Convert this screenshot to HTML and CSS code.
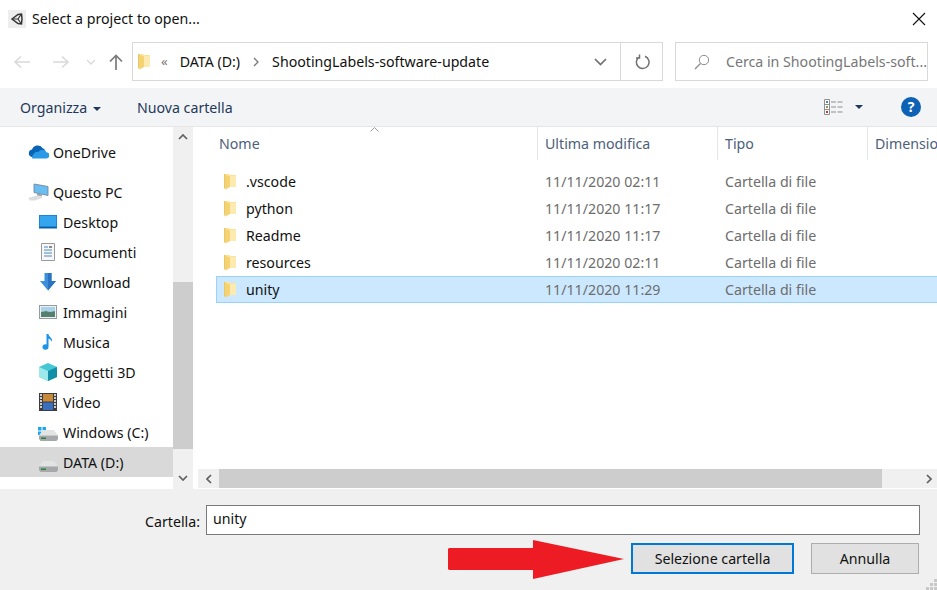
FILE: index.html
```html
<!DOCTYPE html>
<html lang="it">
<head>
  <meta charset="UTF-8" />
  <title>Select a project to open...</title>
  <link rel="stylesheet" href="styles.css">
</head>
<body>
  <svg class="defs" width="0" height="0">
    <symbol id="folder" viewBox="0 0 12 17">
      <path d="M0 1h5l1 1h6v12H0z" fill="#fbe39a"/>
      <path d="M6 3h6v11H6z" fill="#fdeab0"/>
      <path d="M1.500 2L6 3.500V14l-4.500 2.500z" fill="#f5d272"/>
      <path d="M0 1h1.500v15.500L0 15z" fill="#ecc765"/>
    </symbol>
    <symbol id="drive" viewBox="0 0 19 11">
      <path d="M4 0h11l4 5.500H0z" fill="#e2e4e4"/>
      <path d="M0 5.500h19V9l-1.500 2h-16L0 9z" fill="#a5a9a9"/>
      <path d="M2 7.500h5V9H2z" fill="#2f7f3f"/>
    </symbol>
  </svg>

  <!-- barra del titolo -->
  <header class="title-bar">
    <span class="app-icon">
      <svg width="18" height="18" viewBox="0 0 18 18">
        <rect width="18" height="18" fill="#eeeeee"/>
        <path d="M4 9l6-4.500 3.500-.5.500 5-.5 5-3.500-.5z" fill="none" stroke="#333" stroke-width="1.500"/>
        <path d="M5 9h5l3-4.500M10 9l3 4.500" fill="none" stroke="#333" stroke-width="1.200"/>
      </svg>
    </span>
    <span class="title-text">Select a project to open...</span>
    <svg class="close-icon" width="14" height="14" viewBox="0 0 14 14"><path d="M1 1l12 12M13 1L1 13" stroke="#111" stroke-width="1.100"/></svg>
  </header>

  <!-- navigazione -->
  <nav class="nav-bar">
    <div class="nav-buttons">
      <svg class="nav-back" width="18" height="14" viewBox="0 0 18 14"><path d="M17 7H2M8 1.500L2 7l6 5.500" fill="none" stroke="#d9d9d9" stroke-width="1.600"/></svg>
      <svg class="nav-forward" width="18" height="14" viewBox="0 0 18 14"><path d="M1 7h15M10 1.500L16 7l-6 5.500" fill="none" stroke="#d9d9d9" stroke-width="1.600"/></svg>
      <svg class="nav-recent" width="10" height="6" viewBox="0 0 10 6"><path d="M1 1l4 4 4-4" fill="none" stroke="#d9d9d9" stroke-width="1.300"/></svg>
      <svg class="nav-up" width="14" height="16" viewBox="0 0 14 16"><path d="M7 16V2M1 7.500L7 1.500l6 6" fill="none" stroke="#7a7a7a" stroke-width="1.700"/></svg>
    </div>
    <div class="address-box">
      <svg class="addr-folder" width="12" height="17"><use href="#folder"/></svg>
      <span class="addr-more">«</span>
      <span class="addr-part">DATA (D:)</span>
      <svg class="addr-sep" width="6" height="10" viewBox="0 0 6 10"><path d="M1 1l4 4-4 4" fill="none" stroke="#777" stroke-width="1.300"/></svg>
      <span class="addr-part">ShootingLabels-software-update</span>
      <svg class="addr-drop" width="13" height="8" viewBox="0 0 13 8"><path d="M1 1l5.500 5.500L12 1" fill="none" stroke="#707070" stroke-width="1.700"/></svg>
      <span class="addr-refresh">
        <svg width="16" height="16" viewBox="0 0 16 16"><path d="M10 2.300a6.300 6.300 0 1 1-5 .2M4.500 .5v3.500h-3.500" transform="translate(1 0)" fill="none" stroke="#707070" stroke-width="1.500"/></svg>
      </span>
    </div>
    <div class="search-box">
      <svg width="16" height="16" viewBox="0 0 16 16"><circle cx="10" cy="6" r="4.700" fill="none" stroke="#8a8a8a" stroke-width="1"/><path d="M6.500 9.500L1 15" stroke="#8a8a8a" stroke-width="1.200"/></svg>
      <span>Cerca in ShootingLabels-soft...</span>
    </div>
  </nav>

  <!-- comandi -->
  <div class="tool-bar">
    <span class="tool-btn">Organizza <i class="caret"></i></span>
    <span class="tool-btn new-folder">Nuova cartella</span>
    <svg class="view-icon" width="19" height="16" viewBox="0 0 19 16">
      <path d="M.5.500h5v15h-5zM.5 5.500h5M.5 10.500h5" fill="#fff" stroke="#8f8f8f"/>
      <path d="M7 3h5M13.500 3h5M7 8h5M13.500 8h5M7 13h5M13.500 13h5" stroke="#8f8f8f"/>
      <path d="M2 2h2v2H2z" fill="#5a7ea8"/><path d="M2 7h2v2H2z" fill="#7d9a5a"/><path d="M2 12h2v2H2z" fill="#c0392b"/>
    </svg>
    <i class="caret view-caret"></i>
    <span class="help-btn">?</span>
  </div>

  <main class="main">
    <aside class="sidebar">
      <ul class="tree">
        <li class="tree-item top">
          <svg width="21" height="14" viewBox="0 0 21 14"><path d="M4 12a3.800 3.800 0 0 1 0-7.500 6 6 0 0 1 10.500-1.500 4.500 4.500 0 0 1 3 4z" fill="#0a64b4"/><path d="M4 13.500h14a3 3 0 0 0 .5-6.200c-2-3.300-6-3.300-8-.3-3-1-6 2-6.500 6.500z" fill="#2a9ae6"/></svg>
          <span>OneDrive</span>
        </li>
        <li class="tree-item top pc">
          <svg width="21" height="18" viewBox="0 0 21 18"><path d="M6 1l14 2.500v9L6 9.500z" fill="#69bdf0" stroke="#76899a" stroke-width=".9"/><path d="M9 10.500l5 1v2l-5-1z" fill="#9aa5ad"/><path d="M0 15l9-2.500 6 2-8 3H2z" fill="#dadedf"/></svg>
          <span>Questo PC</span>
        </li>
        <li class="tree-item">
          <svg width="18" height="14" viewBox="0 0 18 14"><rect width="18" height="13" fill="#1a86d8"/><path d="M1 1h16v10H1z" fill="#35a5ee"/><path d="M0 12h18v1.500H0z" fill="#0b5fa5"/></svg>
          <span>Desktop</span>
        </li>
        <li class="tree-item">
          <svg width="18" height="18" viewBox="0 0 18 18"><path d="M2.500.500h13v17h-13z" fill="#f7f7f7" stroke="#9a9a9a"/><path d="M5 4h4M5 7h8M5 10h8M5 13h8" stroke="#4a88c0"/><path d="M10 3h3v2h-3z" fill="#8a8a8a"/></svg>
          <span>Documenti</span>
        </li>
        <li class="tree-item">
          <svg width="18" height="18" viewBox="0 0 18 18"><path d="M5.500 0h7v8H17l-8 9.500L1 8h4.500z" fill="#3d8fdc"/><path d="M9 0h3.500v8H17l-8 9.500z" fill="#2a74bf"/></svg>
          <span>Download</span>
        </li>
        <li class="tree-item">
          <svg width="18" height="14" viewBox="0 0 18 14"><rect x=".5" y=".5" width="17" height="13" fill="#eaf2f6" stroke="#9a9a9a"/><path d="M2 2h14v4l-5 1-4-1-5 1z" fill="#a9d3ea"/><path d="M2 7l5-1 4 1 5-1v6H2z" fill="#55806f"/></svg>
          <span>Immagini</span>
        </li>
        <li class="tree-item">
          <svg width="18" height="18" viewBox="0 0 18 18"><path d="M8.500 1v12" stroke="#1f92ea" stroke-width="2"/><path d="M9 1c1 3 5 4 4 8-.5-2-2-3-4-3.500z" fill="#1f92ea"/><ellipse cx="6.500" cy="14" rx="3" ry="2.700" fill="#1f92ea"/></svg>
          <span>Musica</span>
        </li>
        <li class="tree-item">
          <svg width="18" height="18" viewBox="0 0 18 18"><path d="M9 0l9 4v10l-9 4-9-4V4z" fill="#45c7d6"/><path d="M0 4l9 4v10l-9-4z" fill="#9ce8ea"/><path d="M18 4L9 8v10l9-4z" fill="#128fa8"/></svg>
          <span>Oggetti 3D</span>
        </li>
        <li class="tree-item">
          <svg width="18" height="18" viewBox="0 0 18 18"><rect width="18" height="18" fill="#3d3d3d"/><path d="M4 1h10v7.500H4z" fill="#c9893a"/><path d="M4 9.500h10V17H4z" fill="#3a6fc0"/><path d="M1 2h2M1 5h2M1 8h2M1 11h2M1 14h2M15 2h2M15 5h2M15 8h2M15 11h2M15 14h2" stroke="#fff" stroke-width="1.400"/></svg>
          <span>Video</span>
        </li>
        <li class="tree-item">
          <span class="drive-win">
            <svg class="win-logo" width="8" height="8" viewBox="0 0 8 8"><path d="M0 0h3.500v3.500H0zM4.500 0H8v3.500H4.500zM0 4.500h3.500V8H0zM4.500 4.500H8V8H4.500z" fill="#1ea7ee"/></svg>
            <svg class="win-drive" width="19" height="11"><use href="#drive"/></svg>
          </span>
          <span>Windows (C:)</span>
        </li>
        <li class="tree-item selected">
          <svg class="data-drive" width="19" height="11"><use href="#drive"/></svg>
          <span>DATA (D:)</span>
        </li>
      </ul>
      <div class="v-scroll">
        <svg class="arrow" width="10" height="6" viewBox="0 0 10 6"><path d="M1 5l4-4 4 4" fill="none" stroke="#606060" stroke-width="1.700"/></svg>
        <div class="v-thumb"></div>
        <svg class="arrow" width="10" height="6" viewBox="0 0 10 6"><path d="M1 1l4 4 4-4" fill="none" stroke="#606060" stroke-width="1.700"/></svg>
      </div>
    </aside>

    <section class="files">
      <div class="file-head">
        <span class="col-name">Nome</span>
        <span>Ultima modifica</span>
        <span>Tipo</span>
        <span>Dimensione</span>
        <svg class="sort-mark" width="9" height="5" viewBox="0 0 9 5"><path d="M.5 4.500l4-4 4 4" fill="none" stroke="#9a9a9a"/></svg>
      </div>
      <div class="file-list">
        <div class="file-row">
          <span class="file-name"><svg width="12" height="17"><use href="#folder"/></svg>.vscode</span>
          <span>11/11/2020 02:11</span><span>Cartella di file</span>
        </div>
        <div class="file-row">
          <span class="file-name"><svg width="12" height="17"><use href="#folder"/></svg>python</span>
          <span>11/11/2020 11:17</span><span>Cartella di file</span>
        </div>
        <div class="file-row">
          <span class="file-name"><svg width="12" height="17"><use href="#folder"/></svg>Readme</span>
          <span>11/11/2020 11:17</span><span>Cartella di file</span>
        </div>
        <div class="file-row">
          <span class="file-name"><svg width="12" height="17"><use href="#folder"/></svg>resources</span>
          <span>11/11/2020 02:11</span><span>Cartella di file</span>
        </div>
        <div class="file-row active">
          <span class="file-name"><svg width="12" height="17"><use href="#folder"/></svg>unity</span>
          <span>11/11/2020 11:29</span><span>Cartella di file</span>
        </div>
      </div>
      <div class="h-scroll">
        <svg class="arrow-h" width="6" height="10" viewBox="0 0 6 10"><path d="M5 1L1 5l4 4" fill="none" stroke="#606060" stroke-width="1.700"/></svg>
        <div class="h-thumb"></div>
        <svg class="arrow-h" width="6" height="10" viewBox="0 0 6 10"><path d="M1 1l4 4-4 4" fill="none" stroke="#606060" stroke-width="1.700"/></svg>
      </div>
    </section>
  </main>

  <footer class="bottom">
    <div class="name-row">
      <label class="name-label">Cartella:</label>
      <div class="name-input">unity</div>
    </div>
    <div class="actions">
      <button class="btn primary">Selezione cartella</button>
      <button class="btn">Annulla</button>
    </div>
    <svg class="red-arrow" width="176" height="39" viewBox="0 0 176 39"><path d="M1 8h84V0l91 19L85 39v-9H1l-1-1V9z" fill="#ed1c24"/></svg>
    <svg class="grip" width="11" height="11" viewBox="0 0 11 11"><path d="M8 0h3v3H8zM4 4h3v3H4zM8 4h3v3H8zM0 8h3v3H0zM4 8h3v3H4zM8 8h3v3H8z" fill="#c8c8c8"/></svg>
  </footer>
</body>
</html>
```

FILE: styles.css
```css
* {
  box-sizing: border-box;
}
html, body {
  margin: 0;
  height: 590px;
  overflow: hidden;
}
body {
  font-family: "Noto Sans", "Open Sans", sans-serif;
  font-size: 14.2px;
  background: #fff;
  color: #111;
  display: flex;
  flex-direction: column;
  width: 937px;
}
.defs {
  display: block;
  height: 0;
}

/* barra del titolo */
.title-bar {
  height: 37px;
  display: flex;
  align-items: center;
  padding: 0 11px 0 8px;
  flex: none;
}
.app-icon {
  display: flex;
  margin-right: 6px;
}
.title-text {
  flex: 1;
}
.close-icon {
  display: block;
}

/* navigazione */
.nav-bar {
  height: 51px;
  flex: none;
  display: flex;
  padding: 5px 9px 7px 0;
}
.nav-buttons {
  width: 132px;
  display: flex;
  align-items: center;
  padding-left: 13px;
}
.nav-forward {
  margin-left: 21px;
}
.nav-recent {
  margin-left: 16px;
}
.nav-up {
  margin-left: 13px;
}
.address-box {
  width: 531px;
  display: flex;
  align-items: center;
  border: 1px solid #d9d9d9;
  padding-left: 5px;
}
.addr-more {
  margin: 0 12px 2px 11px;
  color: #777;
  font-size: 13px;
}
.addr-sep {
  margin: 0 13px;
}
.addr-drop {
  margin-left: auto;
  margin-right: 13px;
}
.addr-refresh {
  width: 42px;
  height: 100%;
  border-left: 1px solid #d9d9d9;
  display: flex;
  align-items: center;
  justify-content: center;
}
.search-box {
  width: 253px;
  margin-left: 12px;
  border: 1px solid #d9d9d9;
  display: flex;
  align-items: center;
  padding-left: 18px;
  gap: 16px;
  color: #777;
  white-space: nowrap;
  overflow: hidden;
}

/* comandi */
.tool-bar {
  height: 39px;
  flex: none;
  display: flex;
  align-items: center;
  background: #f3f4f6;
  border-bottom: 1px solid #e6e6e6;
  color: #1e395b;
  padding-left: 20px;
  padding-right: 16px;
}
.caret {
  display: inline-block;
  border: 4px solid transparent;
  border-top: 4px solid #1e395b;
  border-bottom: 0;
  vertical-align: 2px;
  margin-left: 2px;
}
.new-folder {
  margin-left: 36px;
}
.view-icon {
  margin-left: auto;
}
.view-caret {
  margin-left: 12px;
}
.help-btn {
  width: 20px;
  height: 20px;
  border-radius: 50%;
  background: #0d62b6;
  color: #fff;
  font-weight: 700;
  font-size: 14px;
  line-height: 20px;
  text-align: center;
  margin-left: 38px;
}

/* parte centrale */
.main {
  height: 362px;
  flex: none;
  display: flex;
}
.sidebar {
  width: 193px;
  flex: none;
  display: flex;
}
.tree {
  list-style: none;
  margin: 0;
  padding: 10px 0 0;
  width: 173px;
}
.tree-item {
  height: 30px;
  display: flex;
  align-items: center;
  gap: 6px;
  padding-left: 39px;
  color: #111;
}
.tree-item svg {
  flex: none;
}
.tree-item.top {
  padding-left: 28px;
  gap: 4px;
}
.tree-item.pc {
  margin: 10px 0 0;
}
.tree-item.selected {
  background: #d9d9d9;
  gap: 5px;
}
.drive-win {
  position: relative;
  width: 18px;
  height: 14px;
  display: block;
}
.win-logo {
  position: absolute;
  left: -1px;
  top: 2px;
}
.win-drive {
  position: absolute;
  left: 0;
  top: 5px;
}
.data-drive {
  margin-top: 8px;
}
.v-scroll {
  width: 20px;
  background: #f0f0f0;
  display: flex;
  flex-direction: column;
  align-items: center;
  padding: 7px 0 8px;
}
.v-thumb {
  background: #cdcdcd;
  width: 100%;
  height: 167px;
  margin: 142px 0 26px;
}
.arrow {
  flex: none;
}

/* elenco file */
.files {
  flex: 1;
  min-width: 0;
  display: flex;
  flex-direction: column;
}
.file-head {
  position: relative;
  height: 33px;
  flex: none;
  display: grid;
  grid-template-columns: 344px 180px 150px 1fr;
  color: #4c607a;
  white-space: nowrap;
  overflow: hidden;
}
.file-head span {
  padding-left: 7px;
  line-height: 33px;
  border-left: 1px solid #e5e5e5;
}
.file-head .col-name {
  padding-left: 26px;
  border-left: 0;
  border-right: 1px solid #e5e5e5;
  margin-right: -1px;
}
.sort-mark {
  position: absolute;
  left: 177px;
  top: 0;
}
.file-list {
  flex: 1;
  padding: 8px 0 0 23px;
}
.file-row {
  height: 27px;
  display: grid;
  grid-template-columns: 321px 180px 1fr;
  align-items: center;
  color: #6d6d6d;
  border: 1px solid transparent;
  border-right: 0;
}
.file-row span:nth-child(n+2) {
  padding-left: 7px;
}
.file-row.active {
  background: #cce8ff;
  border-color: #99d1ff;
}
.file-name {
  display: flex;
  align-items: center;
  gap: 10px;
  padding-left: 7px;
  color: #111;
}
.h-scroll {
  height: 19px;
  margin: 0 0 1px 5px;
  flex: none;
  background: #f0f0f0;
  display: flex;
  align-items: center;
  padding-left: 8px;
  padding-right: 5px;
}
.h-thumb {
  width: 663px;
  height: 100%;
  background: #cdcdcd;
  margin: 0 44px 0 7px;
}

/* parte bassa */
.bottom {
  position: relative;
  flex: 1;
  background: #f0f0f0;
  padding: 16px 17px 0 0;
}
.name-row {
  display: flex;
  align-items: center;
  justify-content: flex-end;
  gap: 6px;
}
.name-label {
  margin-top: 2px;
}
.name-input {
  width: 714px;
  height: 30px;
  background: #fff;
  border: 1px solid #7a7a7a;
  padding: 0 6px;
  line-height: 25px;
}
.actions {
  display: flex;
  justify-content: flex-end;
  gap: 17px;
  margin-top: 8px;
  margin-right: 1px;
}
.btn {
  width: 108px;
  height: 31px;
  font: inherit;
  color: #111;
  background: #e1e1e1;
  border: 1px solid #adadad;
  padding: 0;
}
.btn.primary {
  width: 163px;
  border: 2px solid #0078d7;
}
.red-arrow {
  position: absolute;
  left: 448px;
  top: 51px;
}
.grip {
  position: absolute;
  right: 0;
  bottom: 0;
}
```
